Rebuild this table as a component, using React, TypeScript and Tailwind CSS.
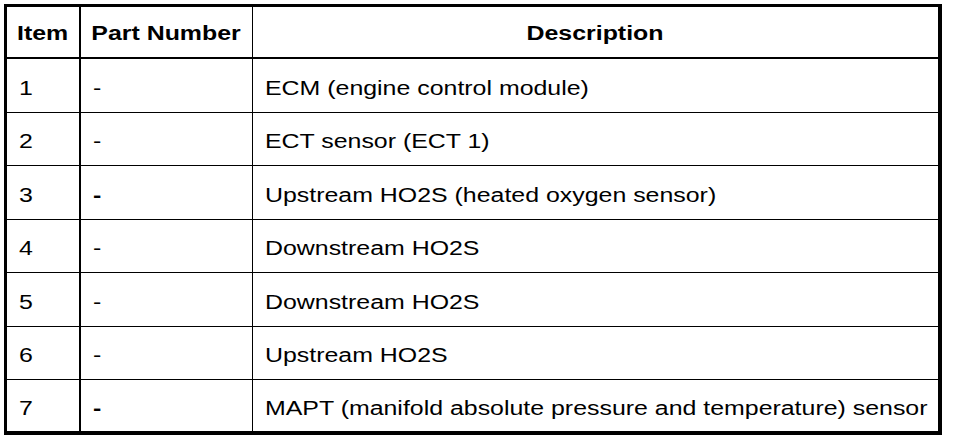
import React from "react";

const rows: { item: string; part: string; desc: string; h: string; last?: boolean; boldPart?: boolean }[] = [
  { item: "1", part: "-", desc: "ECM (engine control module)", h: "h-[54px]" },
  { item: "2", part: "-", desc: "ECT sensor (ECT 1)", h: "h-[53px]" },
  { item: "3", part: "-", desc: "Upstream HO2S (heated oxygen sensor)", h: "h-[54px]", boldPart: true },
  { item: "4", part: "-", desc: "Downstream HO2S", h: "h-[53px]" },
  { item: "5", part: "-", desc: "Downstream HO2S", h: "h-[54px]" },
  { item: "6", part: "-", desc: "Upstream HO2S", h: "h-[53px]" },
  { item: "7", part: "-", desc: "MAPT (manifold absolute pressure and temperature) sensor", h: "h-[51px]", last: true, boldPart: true },
];

function T({ children, center }: { children: React.ReactNode; center?: boolean }) {
  return (
    <span className={`inline-block whitespace-nowrap scale-x-[1.245] ${center ? "origin-center" : "origin-left"}`}>
      {children}
    </span>
  );
}

export default function App() {
  return (
    <div className="w-[960px] h-[440px] bg-white pt-[4px] pl-[4px] text-black font-['Liberation_Sans',Arial,sans-serif] text-[20px] leading-none">
      <div className="w-[938px] h-[431px] border-black border-l-[3px] border-t-[3px] border-r-[4px] border-b-[4px] flex flex-col">
        <div className="flex h-[52px] border-b-[2px] border-black font-bold shrink-0">
          <div className="w-[74px] border-r-[2px] border-black flex items-center justify-center pt-[1px]"><T center>Item</T></div>
          <div className="w-[172px] border-r border-black flex items-center justify-center pt-[1px]"><T center>Part Number</T></div>
          <div className="flex-1 flex items-center justify-center pt-[1px]"><T center>Description</T></div>
        </div>
        {rows.map((r) => (
          <div key={r.item} className={`flex shrink-0 ${r.h} ${r.last ? "" : "border-b border-black"}`}>
            <div className="w-[74px] border-r-[2px] border-black flex items-center pl-[12px] pt-[4px]"><T>{r.item}</T></div>
            <div className={`w-[172px] border-r border-black flex items-center pl-[12px] pt-[4px] ${r.boldPart ? "font-bold" : ""}`}><T>{r.part}</T></div>
            <div className="flex-1 flex items-center pl-[12px] pt-[4px]"><T>{r.desc}</T></div>
          </div>
        ))}
      </div>
    </div>
  );
}
